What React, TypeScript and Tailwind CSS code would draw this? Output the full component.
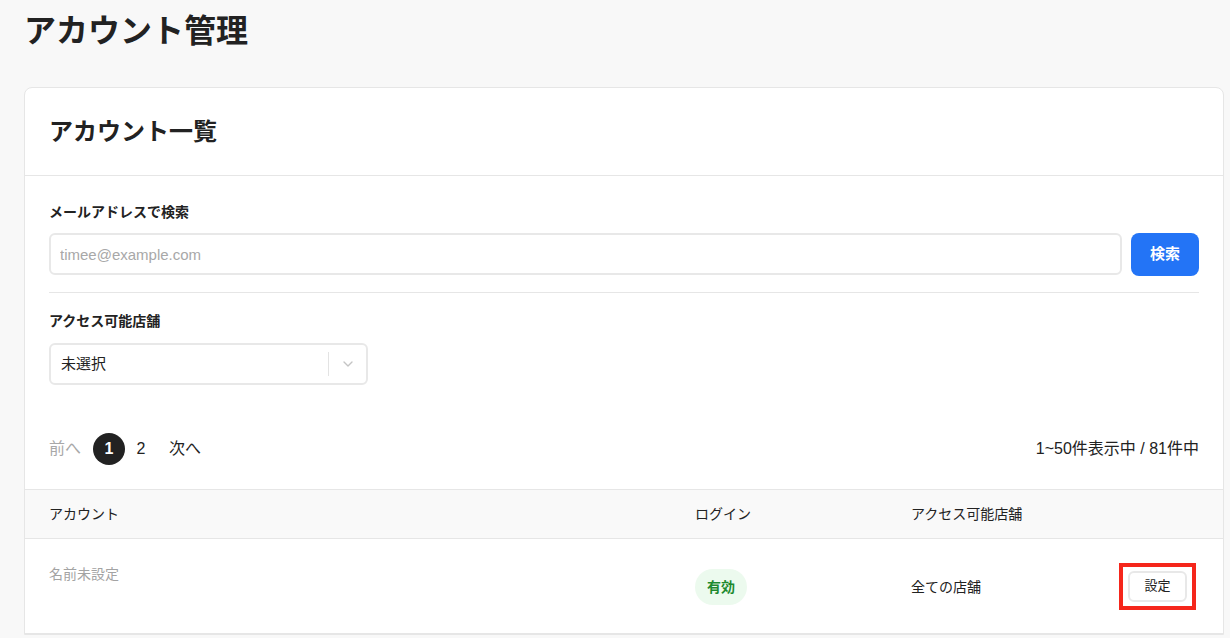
import { ChevronDown } from 'lucide-react'

const font = { fontFamily: '"Liberation Sans", "Noto Sans CJK JP", sans-serif' }

type Account = {
  name: string
  login: boolean
  shops: string
}

const accounts: Account[] = [{ name: '名前未設定', login: true, shops: '全ての店舗' }]

function Pagination() {
  return (
    <div className="flex items-center justify-between px-6 pt-12 pb-6">
      <div className="flex items-center text-base">
        <span className="text-[#a8a8a8]">前へ</span>
        <div className="mx-3 flex items-center">
          <span className="flex h-8 w-8 items-center justify-center rounded-full bg-[#222] font-bold text-white">1</span>
          <span className="flex h-8 w-8 items-center justify-center text-[#222]">2</span>
        </div>
        <span className="text-[#222]">次へ</span>
      </div>
      <span className="text-base text-[#222]">1~50件表示中 / 81件中</span>
    </div>
  )
}

function AccountRow({ account }: { account: Account }) {
  return (
    <div className="grid grid-cols-[646px_216px_1fr_auto] items-center border-b border-[#e6e6e6] px-6 pt-6 pb-[23px] text-sm">
      <div className="h-[46px] leading-5 text-[#a3a3a3]">{account.name}</div>
      <div>
        {account.login && (
          <span className="inline-flex h-9 items-center rounded-full bg-[#ecfaee] px-3 font-bold text-[#1e8a2f]">有効</span>
        )}
      </div>
      <div className="text-[#222]">{account.shops}</div>
      {/* highlighted action */}
      <div className="mr-[3px] border-4 border-[#f5261b] px-[5px] py-1">
        <button className="h-[31px] w-[59px] rounded-md border-2 border-[#e8e8e8] bg-white text-[13px] text-[#222]">設定</button>
      </div>
    </div>
  )
}

export default function App() {
  return (
    <div className="min-h-screen bg-[#f8f8f8] pt-[9px] pr-[6px] pl-6" style={font}>
      <h1 className="text-[32px] leading-[44px] font-bold text-[#222]">アカウント管理</h1>

      <div className="mt-[34px] rounded-t-lg border border-[#e6e6e6] bg-white">
        <div className="flex h-[88px] items-center border-b border-[#e6e6e6] px-6">
          <h2 className="text-2xl font-bold text-[#222]">アカウント一覧</h2>
        </div>

        <div className="px-6 pt-[26px]">
          <label className="block text-sm leading-[21px] font-bold text-[#222]">メールアドレスで検索</label>
          <div className="mt-[10px] flex gap-[9px]">
            <input
              placeholder="timee@example.com"
              className="h-[42px] flex-1 rounded-md border-2 border-[#e8e8e8] px-[9px] text-[15px] text-[#222] outline-none placeholder:text-[#a8a8a8]"
            />
            <button className="h-[43px] w-[68px] rounded-lg bg-[#2374f6] text-[15px] font-bold text-white">検索</button>
          </div>
          <div className="mt-4 border-t border-[#e6e6e6]" />

          <label className="mt-[18px] block text-sm leading-[21px] font-bold text-[#222]">アクセス可能店舗</label>
          <div className="mt-[11px] flex h-[42px] w-[319px] items-center rounded-md border-2 border-[#e8e8e8]">
            <span className="flex-1 px-[10px] text-[15px] text-[#222]">未選択</span>
            <span className="h-6 w-px bg-[#e3e3e3]" />
            <span className="flex w-[37px] justify-center text-[#c4c4c4]">
              <ChevronDown size={16} strokeWidth={2} />
            </span>
          </div>
        </div>

        <Pagination />

        <div className="grid h-[50px] grid-cols-[646px_216px_1fr] items-center border-y border-[#e6e6e6] bg-[#f9f9f9] px-6 text-sm text-[#222]">
          <span>アカウント</span>
          <span>ログイン</span>
          <span>アクセス可能店舗</span>
        </div>

        {accounts.map((a) => (
          <AccountRow key={a.name} account={a} />
        ))}
      </div>
    </div>
  )
}
